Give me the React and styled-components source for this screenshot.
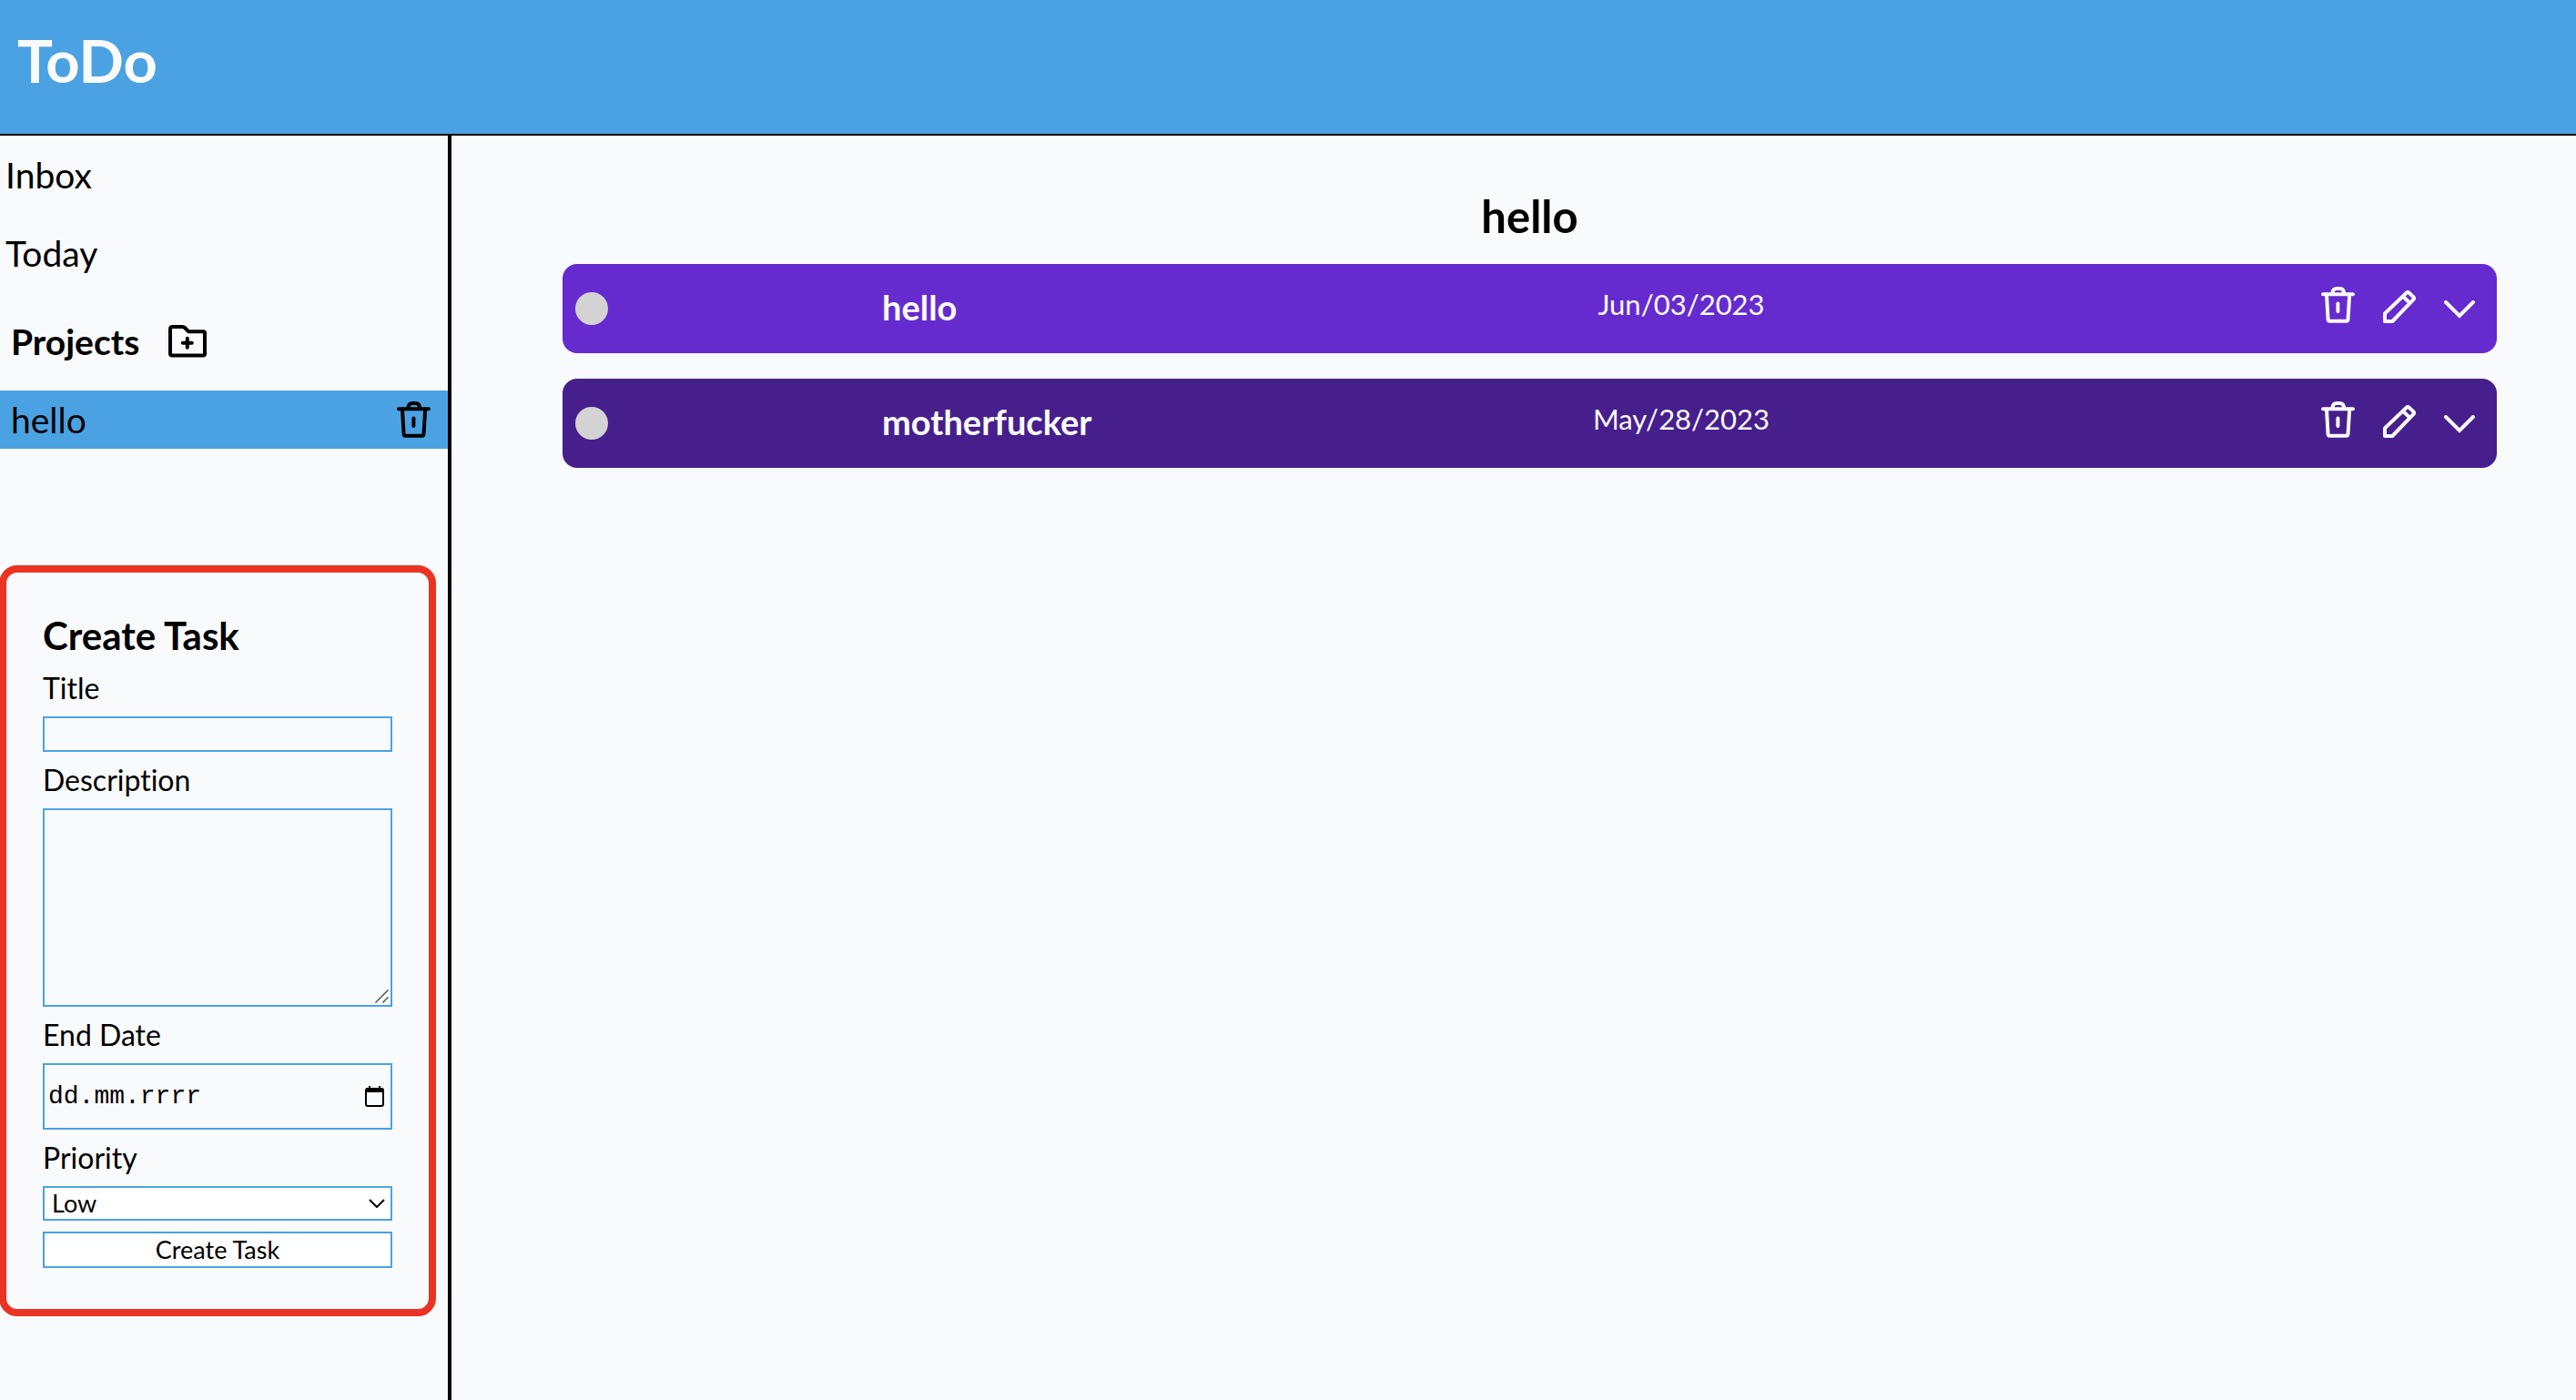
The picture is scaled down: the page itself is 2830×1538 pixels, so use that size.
import React, { useState } from "react";
import styled, { createGlobalStyle } from "styled-components";

const blue = "#4ba2e3";
const paper = "#f9fafc";

const GlobalStyle = createGlobalStyle`
  *, *::before, *::after { box-sizing: border-box; }
  body {
    margin: 0;
    background: ${paper};
    color: #000;
    font-family: Lato, "Open Sans", sans-serif;
    font-variant-ligatures: none;
  }
  h1, h2, h3, ul { margin: 0; padding: 0; }
  ul { list-style: none; }
  button, input, textarea, select { font-family: inherit; color: inherit; }
`;

const Page = styled.div`
  display: flex;
  flex-direction: column;
  min-height: 100vh;
`;

const Header = styled.header`
  padding: 28px 19px 42px;
  background: ${blue};
  border-bottom: 2px solid #000;
  color: ${paper};
`;

const Brand = styled.h1`
  font-size: 65px;
  line-height: 77px;
`;

const Body = styled.div`
  flex: 1;
  display: flex;
`;

const Sidebar = styled.aside`
  flex: none;
  width: 496px;
  border-right: 4px solid #000;
`;

const Nav = styled.nav`
  display: flex;
  flex-direction: column;
  gap: 22px;
  padding-top: 11px;
`;

const NavLink = styled.a`
  padding: 8px 6px;
  font-size: 39px;
  line-height: 48px;
  color: inherit;
  text-decoration: none;
`;

const ProjectsHeader = styled.div`
  display: flex;
  align-items: center;
  gap: 32px;
  margin-top: 11px;
  padding: 8px 12px;
`;

const ProjectsTitle = styled.h3`
  font-size: 39px;
  line-height: 48px;
`;

const ProjectRow = styled.div`
  display: flex;
  align-items: center;
  justify-content: space-between;
  padding: 8px 19px 8px 12px;
  background: ${(p) => (p.$active ? blue : "transparent")};
`;

const ProjectLink = styled.a`
  font-size: 39px;
  line-height: 48px;
  color: inherit;
  text-decoration: none;
`;

const IconButton = styled.button`
  display: flex;
  padding: 0;
  border: 0;
  background: none;
  cursor: pointer;

  svg { display: block; }
`;

const TaskForm = styled.form`
  display: flex;
  flex-direction: column;
  gap: 12px;
  margin: 128px 13px 80px -1px;
  padding: 43px 40px 45px;
  border: 8px solid #ea3323;
  border-radius: 20px;
`;

const FormTitle = styled.h2`
  font-size: 42px;
  line-height: 53px;
`;

const Label = styled.label`
  font-size: 32px;
  line-height: 38px;
`;

const TextInput = styled.input`
  width: 100%;
  height: 39px;
  padding: 2px 4px;
  border: 2px solid ${blue};
  background: ${paper};
  font-size: 27px;
`;

const Overlaid = styled.div`
  position: relative;
  display: flex;
`;

const TextArea = styled.textarea`
  width: 100%;
  height: 218px;
  padding: 4px;
  border: 2px solid ${blue};
  background: ${paper};
  font-size: 27px;
  resize: none;
`;

const Grip = styled.svg`
  position: absolute;
  right: 4px;
  bottom: 4px;
  pointer-events: none;
`;

const DateField = styled.div`
  display: flex;
  align-items: center;
  height: 73px;
  padding: 0 7px 0 4px;
  border: 2px solid ${blue};
`;

const DateInput = styled.input`
  flex: 1;
  min-width: 0;
  padding: 0;
  border: 0;
  background: none;
  font-family: "Liberation Mono", monospace;
  font-size: 28px;
  line-height: 32px;

  &::placeholder { color: #000; opacity: 1; }
`;

const Select = styled.select`
  appearance: none;
  width: 100%;
  height: 38px;
  padding: 0 8px;
  border: 2px solid ${blue};
  border-radius: 0;
  background: #fff;
  font-size: 27px;
  line-height: 32px;
`;

const SelectArrow = styled.svg`
  position: absolute;
  right: 8px;
  top: 14px;
  pointer-events: none;
`;

const SubmitButton = styled.button`
  height: 40px;
  padding: 0;
  border: 2px solid ${blue};
  background: #fff;
  font-size: 27px;
  line-height: 32px;
`;

const Main = styled.main`
  flex: 1;
  padding: 59px 87px 59px 122px;
`;

const ListTitle = styled.h2`
  margin-bottom: 24px;
  font-size: 49px;
  line-height: 58px;
  text-align: center;
`;

const TaskList = styled.ul`
  display: flex;
  flex-direction: column;
  gap: 28px;
`;

const Task = styled.li`
  display: grid;
  grid-template-columns: 337fr 500fr 756fr 494fr;
  align-items: start;
  min-height: 98px;
  padding: 25px 24px 25px 14px;
  border-radius: 16px;
  background: ${(p) => (p.$tone === "dark" ? "#461f8d" : "#652bcf")};
  color: ${paper};
`;

const DoneToggle = styled.input`
  appearance: none;
  align-self: center;
  width: 36px;
  height: 36px;
  margin: 0;
  border-radius: 50%;
  background: #d3d3d3;
  cursor: pointer;
`;

const TaskTitle = styled.h3`
  font-size: 38px;
  line-height: 44px;
`;

const TaskDate = styled.time`
  font-size: 31px;
  line-height: 38px;
  text-align: center;
`;

const Actions = styled.div`
  display: flex;
  align-items: flex-end;
  justify-content: flex-end;
  gap: 31px;
  color: inherit;

  button { color: inherit; }
`;

const stroke = {
  fill: "none",
  stroke: "currentColor",
  strokeWidth: 4,
  strokeLinecap: "round",
  strokeLinejoin: "round",
};

const TrashIcon = () => (
  <svg width="37" height="40" viewBox="0 0 37 40" {...stroke}>
    <path d="M2 8.2H35M12.2 7.5C12.6 4.2 14.4 2 17 2H20.500C23.200 2 25 4.200 25.300 7.500" />
    <path d="M6 8.500L7.600 36Q7.700 37.800 9.400 37.800H27.800Q29.400 37.800 29.500 36L31.200 8.500M18.400 18.600V27" />
  </svg>
);

const PencilIcon = () => (
  <svg width="36" height="36" viewBox="0 0 36 36" {...stroke}>
    <path d="M2 34V25.400L25.700 2.700Q27.200 1.300 28.700 2.700L33.300 7.100Q34.700 8.600 33.300 10.200L10.300 34ZM22.300 7L29.200 13.600" />
  </svg>
);

const ChevronIcon = () => (
  <svg width="34" height="25" viewBox="0 0 34 25" {...stroke}>
    <path d="M2 2L17 17L32 2" strokeLinejoin="miter" />
  </svg>
);

const FolderPlusIcon = () => (
  <svg width="42" height="36" viewBox="0 0 42 36" {...stroke}>
    <path d="M2 31.500V4.500Q2 2 4.500 2H15.500Q17 2 18 3L22 7.200H38.500Q40 7.200 40 8.700V31.500Q40 33.500 38 33.500H4Q2 33.500 2 31.500ZM20.800 14.800V24.800M15.800 19.800H25.800" />
  </svg>
);

const CalendarIcon = () => (
  <svg width="21" height="23" viewBox="0 0 21 23" fill="none" stroke="#000">
    <path d="M5 0V4M16 0V4" strokeWidth="2" />
    <rect x="1" y="3" width="19" height="19" rx="2" strokeWidth="2" />
    <path d="M1 4.500H20" strokeWidth="5" />
  </svg>
);

const tasks = [
  { title: "hello", date: "Jun/03/2023", iso: "2023-06-03", tone: "light" },
  { title: "motherfucker", date: "May/28/2023", iso: "2023-05-28", tone: "dark" },
];

function TaskItem({ task }) {
  return (
    <Task $tone={task.tone}>
      <DoneToggle type="checkbox" aria-label={`Complete ${task.title}`} />
      <TaskTitle>{task.title}</TaskTitle>
      <TaskDate dateTime={task.iso}>{task.date}</TaskDate>
      <Actions>
        <IconButton type="button" aria-label="Delete task"><TrashIcon /></IconButton>
        <IconButton type="button" aria-label="Edit task"><PencilIcon /></IconButton>
        <IconButton type="button" aria-label="Show details"><ChevronIcon /></IconButton>
      </Actions>
    </Task>
  );
}

function CreateTask() {
  const [priority, setPriority] = useState("Low");
  return (
    <TaskForm onSubmit={(e) => e.preventDefault()}>
      <FormTitle>Create Task</FormTitle>
      <Label htmlFor="title">Title</Label>
      <TextInput id="title" type="text" />
      <Label htmlFor="description">Description</Label>
      <Overlaid>
        <TextArea id="description" />
        <Grip width="15" height="15" viewBox="0 0 15 15" stroke="#555" strokeWidth="1.500" aria-hidden="true">
          <path d="M0.500 14.500L14.500 0.500M8.500 14.500L14.500 8.500" />
        </Grip>
      </Overlaid>
      <Label htmlFor="end-date">End Date</Label>
      <DateField>
        <DateInput id="end-date" type="text" placeholder="dd.mm.rrrr" />
        <IconButton type="button" aria-label="Open calendar"><CalendarIcon /></IconButton>
      </DateField>
      <Label htmlFor="priority">Priority</Label>
      <Overlaid>
        <Select id="priority" value={priority} onChange={(e) => setPriority(e.target.value)}>
          <option>Low</option>
          <option>Medium</option>
          <option>High</option>
        </Select>
        <SelectArrow width="18" height="10" viewBox="0 0 18 10" fill="none" stroke="#000" strokeWidth="2" aria-hidden="true">
          <path d="M1 1L9 9L17 1" />
        </SelectArrow>
      </Overlaid>
      <SubmitButton type="submit">Create Task</SubmitButton>
    </TaskForm>
  );
}

export default function App() {
  return (
    <Page>
      <GlobalStyle />
      <Header>
        <Brand>ToDo</Brand>
      </Header>
      <Body>
        <Sidebar>
          <Nav>
            <NavLink href="#inbox">Inbox</NavLink>
            <NavLink href="#today">Today</NavLink>
            <ProjectsHeader>
              <ProjectsTitle>Projects</ProjectsTitle>
              <IconButton type="button" aria-label="Add project"><FolderPlusIcon /></IconButton>
            </ProjectsHeader>
            <ProjectRow $active>
              <ProjectLink href="#hello">hello</ProjectLink>
              <IconButton type="button" aria-label="Delete project"><TrashIcon /></IconButton>
            </ProjectRow>
          </Nav>
          <CreateTask />
        </Sidebar>
        <Main>
          <ListTitle>hello</ListTitle>
          <TaskList>
            {tasks.map((task) => (
              <TaskItem key={task.title} task={task} />
            ))}
          </TaskList>
        </Main>
      </Body>
    </Page>
  );
}
